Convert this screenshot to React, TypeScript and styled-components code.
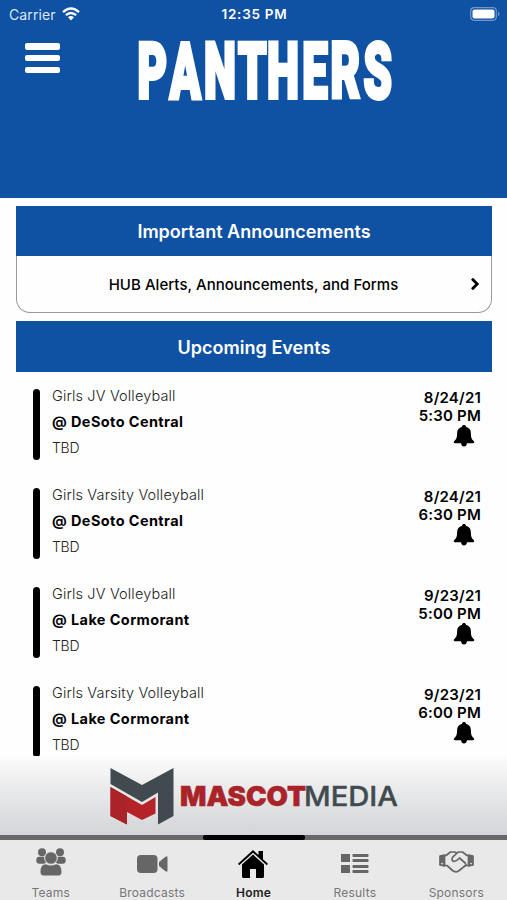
import React from "react";
import styled, { createGlobalStyle } from "styled-components";

const BLUE = "#0f51a3";

const GlobalStyle = createGlobalStyle`
  * { box-sizing: border-box; }
  body { margin: 0; background: #fff; font-family: Inter, "Liberation Sans", sans-serif; color: #000; }
  svg { display: block; flex: none; overflow: visible; }
`;

const Screen = styled.div`
  width: 507px;
  height: 900px;
  display: flex;
  flex-direction: column;
  overflow: hidden;
  background: #fefefe;
`;

const Header = styled.header`
  height: 198px;
  flex: none;
  background: ${BLUE};
  color: #fff;
`;

const StatusBar = styled.div`
  height: 28px;
  padding: 0 7px 0 9px;
  display: grid;
  grid-template-columns: 1fr auto 1fr;
  align-items: center;
`;

const Carrier = styled.span`
  display: flex;
  align-items: center;
  gap: 6px;
  font-size: 14px;
  letter-spacing: 0.12px;
  color: #dce7f6;
`;

const Clock = styled.span`
  font-size: 13.5px;
  font-weight: 600;
  letter-spacing: 0.75px;
`;

const BatterySlot = styled.span`
  justify-self: end;
`;

const TitleRow = styled.div`
  display: flex;
  padding: 13px 0 0 25px;
`;

const MenuButton = styled.button`
  width: 36px;
  height: 30px;
  margin: 2px 76px 0 0;
  padding: 0;
  border: 0;
  background: none;
  display: flex;
  flex-direction: column;
  justify-content: space-between;
`;

const MenuLine = styled.span`
  width: 35px;
  height: 6.5px;
  border-radius: 2px;
  background: #fff;
`;

const Content = styled.main`
  height: 558px;
  flex: none;
  padding: 8px 15px 0 16px;
`;

const SectionTitle = styled.h2<{ $tall?: boolean }>`
  margin: 0;
  height: ${(p) => (p.$tall ? 51 : 50)}px;
  padding-top: ${(p) => (p.$tall ? 1 : 0)}px;
  display: flex;
  align-items: center;
  justify-content: center;
  background: ${BLUE};
  color: #fff;
  font-size: 18px;
  font-weight: 600;
  letter-spacing: 0.02px;
`;

const Announcement = styled.div`
  height: 57px;
  margin-bottom: 8px;
  padding: 0 11px 0 10px;
  display: grid;
  grid-template-columns: 10px 1fr 10px;
  align-items: center;
  text-align: center;
  border: 1px solid #999;
  border-top: 0;
  border-radius: 0 0 14px 14px;
  font-size: 15px;
  font-weight: 500;
  letter-spacing: 0.04px;
`;

const AnnouncementText = styled.span`
  grid-column: 2;
`;

const EventList = styled.div`
  display: flex;
  flex-direction: column;
  gap: 27px;
  padding: 17px 11px 0 17px;
`;

const EventRow = styled.article`
  height: 72px;
  display: flex;
`;

const Stripe = styled.div`
  width: 7px;
  height: 71px;
  border-radius: 4px;
  background: #000;
`;

const EventInfo = styled.div`
  flex: 1;
  padding-left: 12px;
  margin-top: -6px;
  font-size: 14.5px;
  line-height: 26px;
  white-space: nowrap;
`;

const Sport = styled.div`
  font-weight: 300;
  color: #222;
  letter-spacing: 0.15px;
`;

const Opponent = styled.div`
  font-weight: 700;
  letter-spacing: 0.4px;
`;

const Venue = styled.div`
  font-size: 14px;
  font-weight: 300;
  color: #222;
  letter-spacing: -0.3px;
`;

const EventTime = styled.div`
  display: flex;
  flex-direction: column;
  align-items: flex-end;
  font-size: 15px;
  font-weight: 600;
  line-height: 18px;
  letter-spacing: 0.2px;
  text-align: right;
  white-space: nowrap;
`;

const BellSlot = styled.span`
  margin: 0 6px 0 0;
`;

const SponsorBanner = styled.section`
  height: 79px;
  flex: none;
  display: flex;
  justify-content: center;
  padding-top: 11px;
  background: linear-gradient(#fcfcfc, #ececed 38%, #d3d5d8);
`;

const IndicatorTrack = styled.div`
  height: 5px;
  flex: none;
  display: flex;
  justify-content: center;
  background: #686868;
`;

const Indicator = styled.span`
  width: 102px;
  border-radius: 2px;
  background: #000;
`;

const TabBar = styled.nav`
  flex: 1;
  display: grid;
  grid-template-columns: repeat(5, 1fr);
  padding-top: 6px;
  background: #e9e9e9;
`;

const Tab = styled.div<{ $active?: boolean }>`
  display: flex;
  flex-direction: column;
  align-items: center;
  color: ${(p) => (p.$active ? "#000" : "#666")};
`;

const TabIcon = styled.span<{ $lift?: number }>`
  height: 36px;
  display: flex;
  align-items: center;
  padding-bottom: ${(p) => p.$lift ?? 0}px;
`;

const TabLabel = styled.span<{ $active?: boolean }>`
  font-size: 12px;
  line-height: 18px;
  padding-top: 2px;
  letter-spacing: 0.2px;
  font-weight: ${(p) => (p.$active ? 600 : 400)};
  color: ${(p) => (p.$active ? "#222" : "#777")};
`;

const Wifi = () => (
  <svg width="18" height="14" viewBox="0 0 18 14" fill="none" stroke="#fff" strokeWidth="2.3">
    <path d="M1 5.2Q9-2.1 17 5.2M3.9 8.2Q9 3.7 14.1 8.2" />
    <path d="M6 10.3Q9 7.9 12 10.3L9 13.5Z" fill="#fff" stroke="none" />
  </svg>
);

const Battery = () => (
  <svg width="30" height="15" viewBox="0 0 30 15">
    <rect x=".7" y=".7" width="25.6" height="12.6" rx="3.5" fill="none" stroke="#7198cb" strokeWidth="1.2" />
    <rect x="2.5" y="2.5" width="22" height="9" rx="2" fill="#fff" />
    <path d="M28 4.5q3 2.5 0 5z" fill="#7198cb" />
  </svg>
);

const Wordmark = () => (
  <svg width="258" height="84" viewBox="0 0 258 84" role="img" aria-label="Panthers">
    <text
      transform="scale(.59 1)"
      x="0.7 55.5 113.5 171 220.5 280 328 384"
      y="57.3"
      fontFamily="Roboto, Inter, sans-serif"
      fontSize="77"
      fontWeight="900"
      fill="#fff"
      stroke="#fff"
      strokeWidth="4"
    >
      PANTHERS
    </text>
  </svg>
);

const Chevron = () => (
  <svg width="10" height="14" viewBox="0 0 10 14" fill="none" stroke="#000" strokeWidth="2.8">
    <path d="M2 1.8 7.2 7 2 12.2" />
  </svg>
);

const Bell = () => (
  <svg width="22" height="22" viewBox="0 0 22 22">
    <path d="M11 0c1.2 0 1.9.7 1.9 1.7 3.300.8 5 3.300 5 6.600 0 4.500.9 6.100 2.700 7.600 1.200 1 .7 2.300-.6 2.300h-6c-.3 2-1.300 3.300-3 3.300s-2.700-1.300-3-3.300H2c-1.300 0-1.800-1.300-.6-2.300C3.200 14.400 4.100 12.800 4.100 8.300c0-3.300 1.700-5.800 5-6.600C9.100.7 9.800 0 11 0Z" />
  </svg>
);

const MascotLogo = () => (
  <svg width="290" height="62" viewBox="0 0 290 62" role="img" aria-label="Mascot Media">
    <path d="M1.500 1 33 18 64.500 1V49L49 57.500V25.500L33 35 1.500 17Z" fill="#414b4f" />
    <path d="M1.500 20 33 38 46.500 30V46.500L33 53 18 45V57.500L1.500 49Z" fill="#b52328" />
    <path d="M1.500 49V20L18 29.500V57.500Z" fill="#a92328" />
    <text x="71" y="39" textLength="126" lengthAdjust="spacingAndGlyphs" fontFamily="Inter, sans-serif" fontSize="27.500" fontWeight="900" fill="#a92328" stroke="#a92328" strokeWidth=".5">MASCOT</text>
    <text x="195" y="39" textLength="94" lengthAdjust="spacingAndGlyphs" fontFamily="Inter, sans-serif" fontSize="27.500" fontWeight="500" fill="#414b4f" stroke="#414b4f" strokeWidth=".4">MEDIA</text>
  </svg>
);

const Teams = () => (
  <svg width="30" height="28" viewBox="0 0 30 28" fill="currentColor">
    <circle cx="6" cy="4.200" r="4" />
    <circle cx="24" cy="4.200" r="4" />
    <rect x="0.300" y="8.700" width="10" height="7" rx="3" />
    <rect x="19.700" y="8.700" width="10" height="7" rx="3" />
    <circle cx="15" cy="10" r="6.300" stroke="#e9e9e9" />
    <path d="M4.500 24c0-5 2-7.700 5.500-7.700 3 1.700 7 1.700 10 0 3.500 0 5.500 2.700 5.500 7.700 0 2-1 3.500-3 3.500h-15c-2 0-3-1.500-3-3.500Z" />
  </svg>
);

const Camera = () => (
  <svg width="31" height="20" viewBox="0 0 31 20" fill="currentColor">
    <rect x="0" y="1" width="20.500" height="18" rx="4" />
    <path d="M22 8 28.500 2.700Q30.500 1.500 30.500 3.500v13Q30.500 18.500 28.500 17.300L22 12Z" />
  </svg>
);

const House = () => (
  <svg width="30" height="28" viewBox="0 0 30 28">
    <path d="M15 0 20.500 5V1h4.500v8.200L30 13.800l-1.200 1.400L15 2.700 1.200 15.200 0 13.800Z" />
    <path d="M15 4.500 26 14.500V26.500q0 1.500-1.500 1.500H18v-9h-6v9H5.500q-1.500 0-1.500-1.500V14.500Z" />
  </svg>
);

const Results = () => (
  <svg width="28" height="21" viewBox="0 0 28 21" fill="currentColor">
    <rect width="9" height="8" />
    <rect y="11" width="9" height="8" />
    {[0, 5, 11, 16].map((y) => <rect key={y} x="11.500" y={y} width="16" height="3" rx=".7" />)}
  </svg>
);

const Handshake = () => (
  <svg width="35" height="22" viewBox="0 0 35 22" fill="none" stroke="currentColor" strokeWidth="1.700" strokeLinejoin="round" strokeLinecap="round">
    <path d="M5.500 4.500H7L11.500 1h4l2 1 2-1h4L28 4.500h1.500M5.500 14.500H8l5.500 5q3 2.300 6 .5l7-5.500h3" />
    <path d="M18 2 13.500 6.300q-1.500 3.500 1.700 4 2.500 0 5.300-3.300l5.700 5q1.200 1.500.3 2.500" />
    <path d="M1 5 5.500 4v11L1 14ZM34 5l-4.500-1v11l4.500-1Z" fill="currentColor" />
    <path d="M3 12.500h.1M32 12.500h.1" stroke="#e9e9e9" />
  </svg>
);

const events = [
  { sport: "Girls JV Volleyball", opponent: "@ DeSoto Central", date: "8/24/21", time: "5:30 PM" },
  { sport: "Girls Varsity Volleyball", opponent: "@ DeSoto Central", date: "8/24/21", time: "6:30 PM" },
  { sport: "Girls JV Volleyball", opponent: "@ Lake Cormorant", date: "9/23/21", time: "5:00 PM" },
  { sport: "Girls Varsity Volleyball", opponent: "@ Lake Cormorant", date: "9/23/21", time: "6:00 PM" },
];

const tabs = [
  { label: "Teams", icon: <Teams />, lift: 5 },
  { label: "Broadcasts", icon: <Camera /> },
  { label: "Home", icon: <House />, active: true },
  { label: "Results", icon: <Results /> },
  { label: "Sponsors", icon: <Handshake />, lift: 4 },
];

export default function App() {
  return (
    <>
      <GlobalStyle />
      <Screen>
        <Header>
          <StatusBar>
            <Carrier>Carrier <Wifi /></Carrier>
            <Clock>12:35 PM</Clock>
            <BatterySlot><Battery /></BatterySlot>
          </StatusBar>
          <TitleRow>
            <MenuButton aria-label="Menu"><MenuLine /><MenuLine /><MenuLine /></MenuButton>
            <Wordmark />
          </TitleRow>
        </Header>
        <Content>
          <SectionTitle>Important Announcements</SectionTitle>
          <Announcement>
            <AnnouncementText>HUB Alerts, Announcements, and Forms</AnnouncementText>
            <Chevron />
          </Announcement>
          <SectionTitle $tall>Upcoming Events</SectionTitle>
          <EventList>
            {events.map((e) => (
              <EventRow key={e.date + e.time}>
                <Stripe />
                <EventInfo>
                  <Sport>{e.sport}</Sport>
                  <Opponent>{e.opponent}</Opponent>
                  <Venue>TBD</Venue>
                </EventInfo>
                <EventTime>
                  <span>{e.date}</span>
                  <span>{e.time}</span>
                  <BellSlot><Bell /></BellSlot>
                </EventTime>
              </EventRow>
            ))}
          </EventList>
        </Content>
        <SponsorBanner><MascotLogo /></SponsorBanner>
        <IndicatorTrack><Indicator /></IndicatorTrack>
        <TabBar>
          {tabs.map((t) => (
            <Tab key={t.label} $active={t.active}>
              <TabIcon $lift={t.lift}>{t.icon}</TabIcon>
              <TabLabel $active={t.active}>{t.label}</TabLabel>
            </Tab>
          ))}
        </TabBar>
      </Screen>
    </>
  );
}
